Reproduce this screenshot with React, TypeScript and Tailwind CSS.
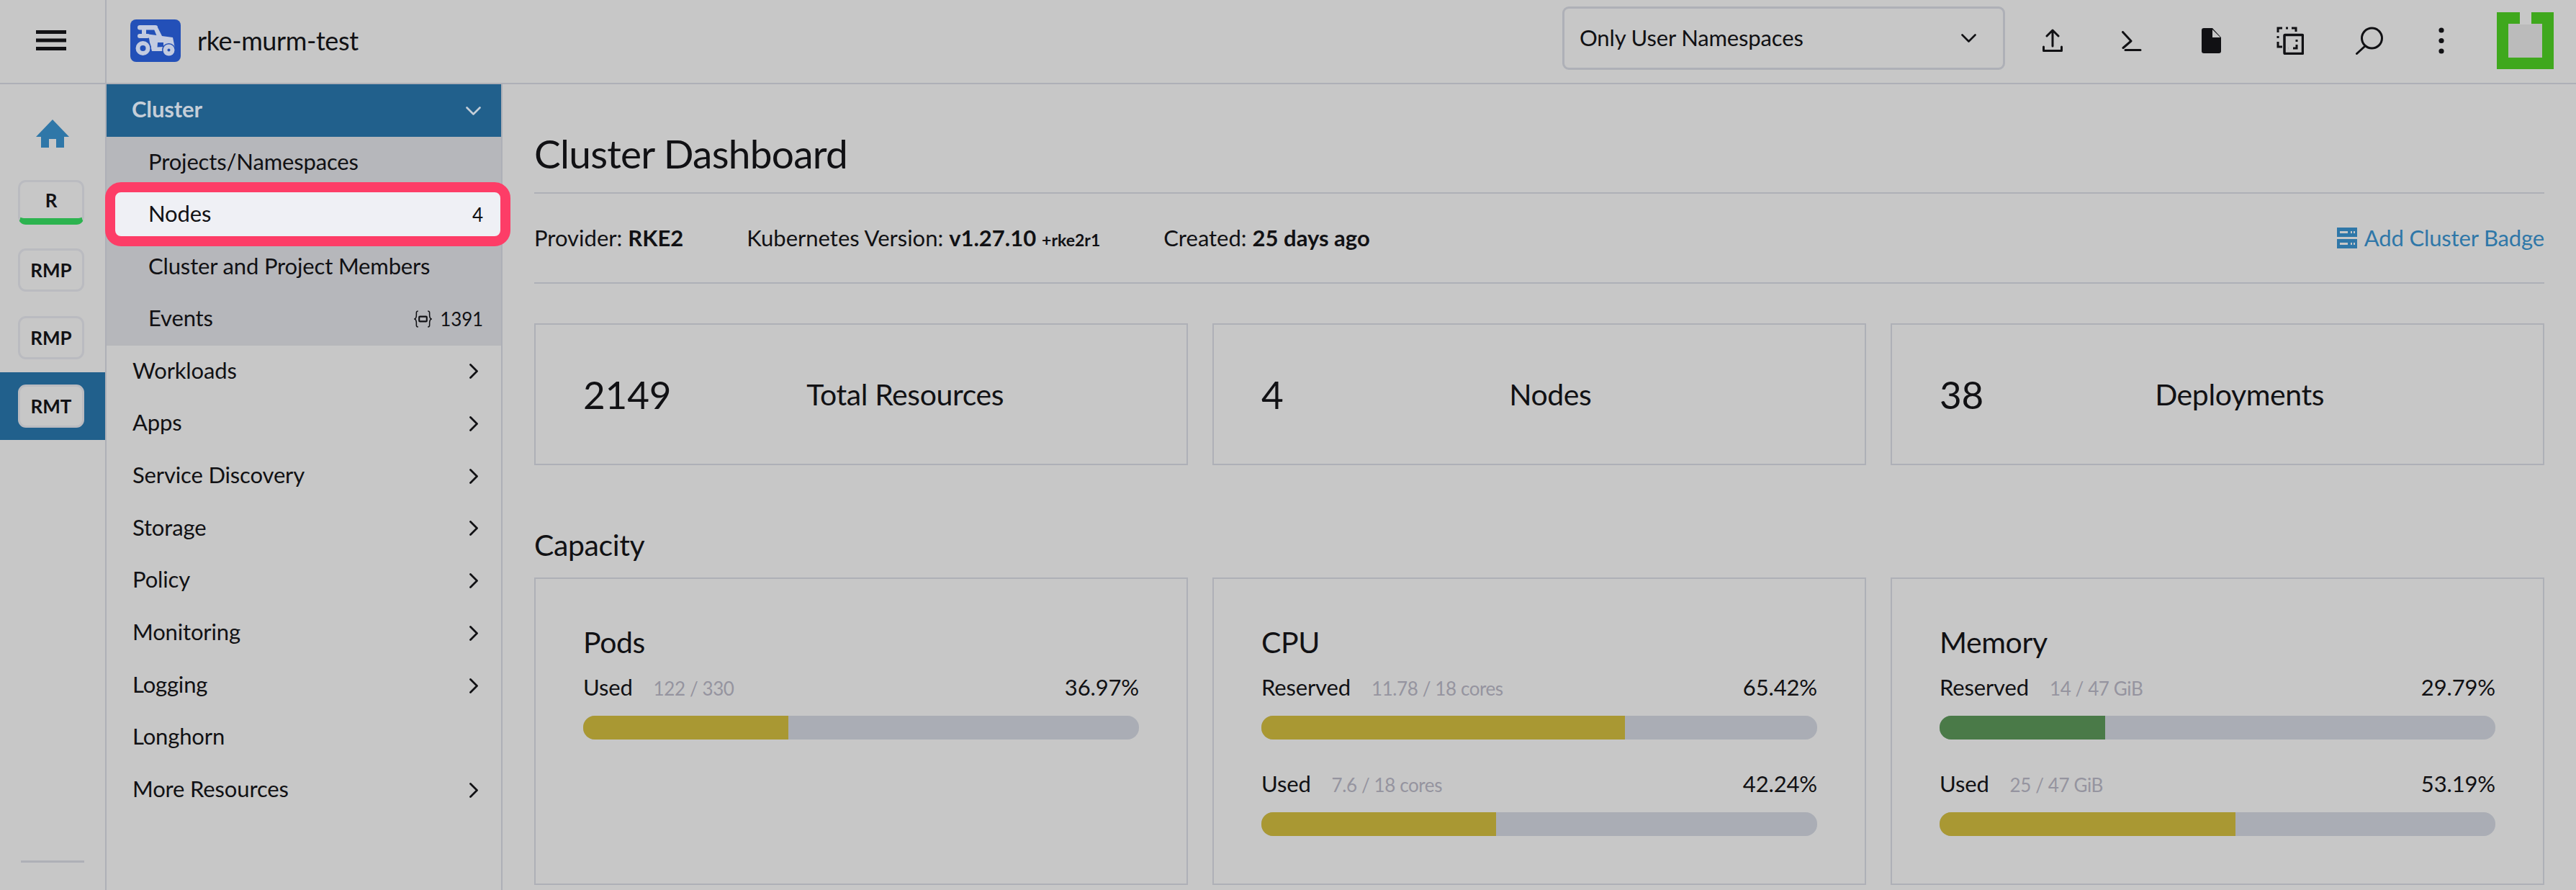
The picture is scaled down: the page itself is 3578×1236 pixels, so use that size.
import { ReactNode } from 'react';

const navItems = [
  { label: 'Workloads', arrow: true },
  { label: 'Apps', arrow: true },
  { label: 'Service Discovery', arrow: true },
  { label: 'Storage', arrow: true },
  { label: 'Policy', arrow: true },
  { label: 'Monitoring', arrow: true },
  { label: 'Logging', arrow: true },
  { label: 'Longhorn', arrow: false },
  { label: 'More Resources', arrow: true },
];

const stats = [
  { count: '2149', label: 'Total Resources' },
  { count: '4', label: 'Nodes' },
  { count: '38', label: 'Deployments' },
];

type Meter = { label: string; detail: string; percent: string; width: string; color: string };

const capacity: { title: string; meters: Meter[] }[] = [
  {
    title: 'Pods',
    meters: [{ label: 'Used', detail: '122 / 330', percent: '36.97%', width: '36.97%', color: 'bg-[#a99833]' }],
  },
  {
    title: 'CPU',
    meters: [
      { label: 'Reserved', detail: '11.78 / 18 cores', percent: '65.42%', width: '65.42%', color: 'bg-[#a99833]' },
      { label: 'Used', detail: '7.6 / 18 cores', percent: '42.24%', width: '42.24%', color: 'bg-[#a99833]' },
    ],
  },
  {
    title: 'Memory',
    meters: [
      { label: 'Reserved', detail: '14 / 47 GiB', percent: '29.79%', width: '29.79%', color: 'bg-[#4a7a48]' },
      { label: 'Used', detail: '25 / 47 GiB', percent: '53.19%', width: '53.19%', color: 'bg-[#a99833]' },
    ],
  },
];

function ClusterChip({ label, active, ready }: { label: string; active?: boolean; ready?: boolean }) {
  return (
    <div
      className={`w-[92px] flex items-center justify-center rounded-[11px] border-[3px] border-[#babbc0] text-[26px] font-bold tracking-normal text-[#111114] overflow-hidden ${
        ready ? 'h-[62px] border-b-[9px] border-b-[#2cb34f]' : 'h-[60px]'
      } ${active ? 'bg-[#c7c7c7]' : ''}`}
    >
      {label}
    </div>
  );
}

function ChevronDown() {
  return (
    <svg viewBox="0 0 21 12" className="w-[21px] h-[12px]" fill="none" stroke="currentColor" strokeWidth={2.6} strokeLinecap="round" strokeLinejoin="round">
      <path d="M1.500 1.500l9 9 9-9" />
    </svg>
  );
}

function ChevronRight() {
  return (
    <svg viewBox="0 0 12 21" className="w-[12px] h-[21px]" fill="none" stroke="currentColor" strokeWidth={2.800} strokeLinecap="round" strokeLinejoin="round">
      <path d="M1.500 1.500l9 9-9 9" />
    </svg>
  );
}

function SubItem({ children, right }: { children: ReactNode; right?: ReactNode }) {
  return (
    <div className="h-[72.4px] flex items-center justify-between pl-[58px] pr-[25px]">
      <span className="mb-[4px]">{children}</span>
      {right}
    </div>
  );
}

function TractorLogo() {
  return (
    <svg viewBox="0 0 70 59" className="w-[70px] h-[59px] shrink-0">
      <rect width="70" height="59" rx="8" fill="#2350b8" />
      <g fill="#c3cbe0">
        <rect x="10" y="8" width="28" height="6.5" rx="3.2" />
        <rect x="10" y="20" width="17" height="6" rx="3" />
        <path d="M16 13h6v9h-6z" />
        <path d="M31 9h6l7.500 15-6.500 2z" />
        <path fillRule="evenodd" d="M25 20.500l34 4.500 3 15-16 4H30l-3-12zM38 32l-.5 6.500 8.500-.5V32z" />
      </g>
      <circle cx="17.500" cy="40" r="11.500" fill="#2350b8" />
      <circle cx="17.500" cy="40" r="10" fill="#c3cbe0" />
      <circle cx="17.500" cy="40" r="4" fill="#2350b8" />
      <circle cx="53.500" cy="42.500" r="9.500" fill="#2350b8" />
      <circle cx="53.500" cy="42.500" r="8" fill="#c3cbe0" />
      <circle cx="53.500" cy="42.500" r="2" fill="#2350b8" />
    </svg>
  );
}

function HeaderIcons() {
  return (
    <div className="flex items-center text-[#111114] mb-[2px]">
      <button className="w-[110px] flex justify-center">
        <svg viewBox="0 0 28 33" className="w-[28px] h-[33px]" fill="none" stroke="currentColor" strokeWidth={3} strokeLinecap="round" strokeLinejoin="round">
          <path d="M14 24V2M6 10l8-8 8 8" />
          <path d="M1.500 25v5.500h25V25" />
        </svg>
      </button>
      <button className="w-[110px] flex justify-center">
        <svg viewBox="0 0 28 28" className="w-[28px] h-[28px]" fill="none" stroke="currentColor" strokeWidth={3} strokeLinecap="round" strokeLinejoin="round">
          <path d="M1.500 1.500L13 14 2 23.500M5 26.500h21" />
        </svg>
      </button>
      <button className="w-[110px] flex justify-center">
        <svg viewBox="0 0 27 35" className="w-[27px] h-[35px]">
          <path d="M3 0h12l12 13v19a3 3 0 0 1-3 3H3a3 3 0 0 1-3-3V3a3 3 0 0 1 3-3z" fill="currentColor" />
          <path d="M15 2v11h11z" fill="#c7c7c7" />
        </svg>
      </button>
      <button className="w-[110px] flex justify-center">
        <svg viewBox="0 0 38 39" className="w-[38px] h-[39px]" fill="none" stroke="currentColor" strokeWidth={3}>
          <path d="M8 2H2v6M13 2h3M21 2h6v5M2 13v3M2 21v7h6" />
          <rect x="11" y="11.500" width="25.500" height="26" rx="1" strokeWidth={3.500} />
          <path d="M28 18v3M28 25v5h-5M16 30h.1" />
        </svg>
      </button>
      <button className="w-[110px] flex justify-center">
        <svg viewBox="0 0 40 39" className="w-[40px] h-[39px]" fill="none" stroke="currentColor" strokeWidth={3} strokeLinecap="round">
          <circle cx="23.500" cy="16" r="14" />
          <path d="M14 27L2.500 37.500" />
        </svg>
      </button>
      <button className="w-[90px] flex justify-center">
        <svg viewBox="0 0 8 38" className="w-[8px] h-[38px]" fill="currentColor">
          <circle cx="4" cy="4" r="3.600" />
          <circle cx="4" cy="18.500" r="3.600" />
          <circle cx="4" cy="33" r="3.600" />
        </svg>
      </button>
    </div>
  );
}

function BrandMark() {
  return (
    <div className="relative w-[79px] h-[79px] ml-[32px] mr-[31px] mb-[2px] bg-[#3fa81d] shrink-0">
      <div className="absolute left-[16px] top-[16px] w-[47px] h-[47px] bg-[#bbbbbb]" />
      <div className="absolute left-[32px] top-0 w-[16px] h-[17px] bg-[#c7c7c7]" />
    </div>
  );
}

function CapacityCard({ title, meters }: { title: string; meters: Meter[] }) {
  return (
    <div className="h-[427px] border-2 border-[#aeb0b7] pt-[64px] pl-[66px] pr-[66px]">
      <div className="h-[50px] flex items-center text-[41px] leading-none tracking-[-0.4px]">
        <span className="mb-[4px]">{title}</span>
      </div>
      <div className="mt-[14px] flex flex-col gap-[39px]">
        {meters.map((m) => (
          <div key={m.label}>
            <div className="h-[45px] flex items-center justify-between">
              <div className="flex items-baseline gap-[29px]">
                <span>{m.label}</span>
                <span className="text-[26px] text-[#95949f] tracking-[-0.4px]">{m.detail}</span>
              </div>
              <span>{m.percent}</span>
            </div>
            <div className="mt-[17px] h-[33px] rounded-[16px] bg-[#aaadb5] overflow-hidden">
              <div className={`h-full ${m.color}`} style={{ width: m.width }} />
            </div>
          </div>
        ))}
      </div>
    </div>
  );
}

export default function App() {
  return (
    <div className="h-[1236px] overflow-hidden bg-[#c7c7c7] text-[31px] tracking-[-0.15px] text-[#111114] font-['Lato',sans-serif] flex flex-col">
      <header className="h-[117px] shrink-0 flex items-center border-b-2 border-[#aeb0b7]">
        <div className="w-[148px] h-full shrink-0 border-r-2 border-[#aeb0b7] flex items-center justify-center">
          <svg viewBox="0 0 42 28" className="w-[42px] h-[28px] mr-[4px] mb-[4px]" fill="currentColor">
            <rect width="42" height="5" />
            <rect y="11.500" width="42" height="5" />
            <rect y="23" width="42" height="5" />
          </svg>
        </div>
        <div className="ml-[33px] mb-[3px]">
          <TractorLogo />
        </div>
        <div className="ml-[23px] mb-[4px] text-[36px] tracking-[-0.4px]">rke-murm-test</div>
        <div className="ml-auto mb-[10px] w-[615px] h-[88px] border-[3px] border-[#aeb0b7] rounded-[9px] flex items-center justify-between pl-[21px] pr-[37px]">
          <span>Only User Namespaces</span>
          <ChevronDown />
        </div>
        <div className="ml-[11px]">
          <HeaderIcons />
        </div>
        <BrandMark />
      </header>

      <div className="flex-1 flex min-h-0">
        <aside className="w-[148px] shrink-0 border-r-2 border-[#aeb0b7] flex flex-col items-center pt-[49px]">
          <svg viewBox="0 0 46 39" className="w-[46px] h-[39px] shrink-0" fill="#2f77a8">
            <path d="M23 0L46 24H39V39H28V27H18V39H7V24H0z" />
          </svg>
          <div className="mt-[45px] mr-[4px]">
            <ClusterChip label="R" ready />
          </div>
          <div className="mt-[33px] mr-[4px]">
            <ClusterChip label="RMP" />
          </div>
          <div className="mt-[34px] mr-[4px]">
            <ClusterChip label="RMP" />
          </div>
          <div className="mt-[18px] w-full h-[94px] bg-[#21608c] flex items-center justify-center pr-[4px]">
            <ClusterChip label="RMT" active />
          </div>
          <div className="mt-auto mb-[38px] w-[88px] h-[3px] bg-[#aeb0b7]" />
        </aside>

        <nav className="w-[550px] shrink-0 border-r-2 border-[#aeb0b7]">
          <div className="h-[73px] bg-[#21608c] flex items-center justify-between pl-[35px] pr-[28px] text-[#c5ced8] font-bold">
            <span className="mb-[4px]">Cluster</span>
            <ChevronDown />
          </div>
          <div className="bg-[#b6b7bb]">
            <SubItem>Projects/Namespaces</SubItem>
            <div className="relative">
              <div className="absolute -left-[2px] -right-[13px] -top-[9px] -bottom-[7px] rounded-[22px] border-[14px] border-[#fd3d67] bg-[#eff0f5]" />
              <div className="relative">
                <SubItem right={<span className="text-[26px]">4</span>}>Nodes</SubItem>
              </div>
            </div>
            <SubItem>Cluster and Project Members</SubItem>
            <SubItem
              right={
                <span className="flex items-center gap-[11px] text-[26px]">
                  <svg viewBox="0 0 26 26" className="w-[25px] h-[26px]" fill="none" stroke="currentColor" strokeWidth={1.600}>
                    <path d="M6 1.500C3 1.500 3.500 4 3.500 7S3.500 12 1 13c2.500 1 2.500 3 2.500 6s-.5 5.500 2.500 5.500" />
                    <path d="M20 1.500c3 0 2.500 2.500 2.500 5.500s0 5 2.500 6c-2.500 1-2.500 3-2.500 6s.5 5.500-2.500 5.500" />
                    <rect x="7.500" y="9.500" width="11" height="7" rx="1" strokeWidth={2.200} />
                  </svg>
                  1391
                </span>
              }
            >
              Events
            </SubItem>
          </div>
          {navItems.map((item) => (
            <div key={item.label} className="h-[72.7px] flex items-center justify-between pl-[36px] pr-[32px]">
              <span className="mb-[4px]">{item.label}</span>
              {item.arrow && <ChevronRight />}
            </div>
          ))}
        </nav>

        <main className="flex-1 min-w-0 pl-[44px] pr-[44px]">
          <div className="pt-[66px] pb-[24px] border-b-2 border-[#aeb0b7]">
            <h1 className="text-[55px] leading-[60px] tracking-[-0.75px]">Cluster Dashboard</h1>
          </div>
          <div className="h-[125px] border-b-2 border-[#aeb0b7] flex items-center justify-between">
            <div className="flex items-baseline gap-[88px] tracking-normal">
              <span>
                Provider: <b>RKE2</b>
              </span>
              <span>
                Kubernetes Version: <b>v1.27.10</b> <b className="text-[23px]">+rke2r1</b>
              </span>
              <span>
                Created: <b>25 days ago</b>
              </span>
            </div>
            <div className="flex items-center gap-[10px] text-[#2f77a8]">
              <svg viewBox="0 0 28 29" className="w-[28px] h-[29px]" fill="currentColor">
                <path fillRule="evenodd" d="M0 0h28v13H0zM4 5v3h11V5zM19 5v3h2V5zM23 5v3h2V5z" />
                <path fillRule="evenodd" d="M0 16h28v13H0zM4 21v3h11v-3zM19 21v3h2v-3zM23 21v3h2v-3z" />
              </svg>
              Add Cluster Badge
            </div>
          </div>

          <div className="mt-[55px] grid grid-cols-3 gap-[34px]">
            {stats.map((s) => (
              <div key={s.label} className="h-[197px] border-2 border-[#aeb0b7] px-[66px] flex items-center">
                <span className="text-[53px]">{s.count}</span>
                <span className="flex-1 text-center text-[41px] tracking-[-0.4px]">{s.label}</span>
              </div>
            ))}
          </div>

          <h2 className="mt-[90px] h-[45px] flex items-center text-[41px] tracking-[-0.4px]">
            <span className="mb-[4px]">Capacity</span>
          </h2>
          <div className="mt-[21px] grid grid-cols-3 gap-[34px]">
            {capacity.map((c) => (
              <CapacityCard key={c.title} title={c.title} meters={c.meters} />
            ))}
          </div>
        </main>
      </div>
    </div>
  );
}
